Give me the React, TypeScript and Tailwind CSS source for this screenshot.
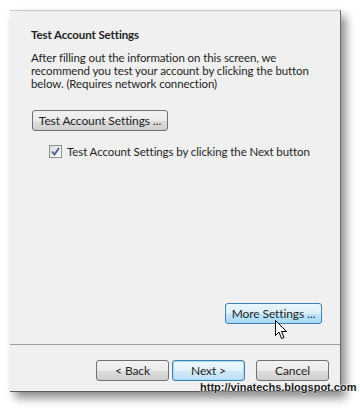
import React from 'react'

const font = { fontFamily: 'Lato, "Segoe UI", Arial, sans-serif' }

function WinButton({
  children,
  variant = 'normal',
  className = '',
}: {
  children: React.ReactNode
  variant?: 'normal' | 'default' | 'hover'
  className?: string
}) {
  const look =
    variant === 'hover'
      ? 'border-[#3c7fb1] bg-[linear-gradient(to_bottom,#eaf6fd_0%,#d9f0fc_50%,#bee6fd_51%,#a7d9f5_100%)]'
      : variant === 'default'
        ? 'border-[#3c7fb1] bg-[linear-gradient(to_bottom,#eef7fd_0%,#e2f1fb_50%,#cfe8f8_51%,#bfe0f5_100%)] shadow-[inset_0_0_0_1px_#a8dcf7]'
        : 'border-[#707070] bg-[linear-gradient(to_bottom,#f2f2f2_0%,#ebebeb_50%,#dddddd_51%,#cfcfcf_100%)]'
  return (
    <button
      type="button"
      className={`h-[21px] rounded-[3px] border text-[12px] tracking-[-0.1px] leading-none text-[#1e1e1e] flex items-center justify-center ${look} ${className}`}
      style={font}
    >
      {children}
    </button>
  )
}

export default function App() {
  return (
    <div className="relative w-[360px] h-[411px] bg-white overflow-hidden pl-[10px] pt-[10px]" style={font}>
      {/* Dialog panel */}
      <div className="w-[331px] h-[382px] bg-[#f0f0f0] flex flex-col border-t border-t-[#c8c8c8] border-r border-r-[#6a6a6a] border-b border-b-[#5a5a5a] shadow-[5px_6px_9px_rgba(0,0,0,0.45)]">
        <div className="flex-1 flex flex-col px-[21px] pt-[17px] text-[11.5px] tracking-[-0.1px] text-[#1e1e1e]">
          <h2 className="font-bold leading-[14px]">Test Account Settings</h2>
          <p className="mt-[9px] leading-[13px] whitespace-nowrap">
            After filling out the information on this screen, we
            <br />
            recommend you test your account by clicking the button
            <br />
            below. (Requires network connection)
          </p>

          <WinButton className="mt-[20px] w-[136px] ml-px">Test Account Settings ...</WinButton>

          <label className="mt-[14px] ml-[18px] flex items-center gap-[5px] leading-[13px] whitespace-nowrap">
            <span className="w-[13px] h-[13px] border border-[#8e8f8f] bg-[linear-gradient(135deg,#dcdcdc,#fbfbfb)] flex items-center justify-center">
              <svg width="9" height="9" viewBox="0 0 9 9">
                <path d="M1 4.5 L3.5 7.5 L8 1" fill="none" stroke="#4a5f97" strokeWidth="1.8" />
              </svg>
            </span>
            Test Account Settings by clicking the Next button
          </label>

          <div className="flex-1" />

          <div className="flex justify-end pb-[20px] mr-[-3px]">
            <div className="relative">
              <WinButton variant="hover" className="w-[97px]">More Settings ...</WinButton>
              {/* mouse cursor */}
              <svg className="absolute left-[50px] top-[17px]" width="13" height="20" viewBox="0 0 13 20">
                <path
                  d="M0.5 0.5 L0.5 15.5 L4 12 L6.5 18.5 L9 17.5 L6.5 11.5 L11.5 11.5 Z"
                  fill="white"
                  stroke="black"
                  strokeWidth="1"
                  strokeLinejoin="round"
                />
              </svg>
            </div>
          </div>
        </div>

        <div className="h-[47px] border-t border-t-[#a0a0a0] flex items-start justify-end pt-[15px] pr-[11px]">
          <WinButton className="w-[73px]">&lt; Back</WinButton>
          <WinButton variant="default" className="w-[73px] ml-[3px]">Next &gt;</WinButton>
          <WinButton className="w-[73px] ml-[11px]">Cancel</WinButton>
        </div>
      </div>

      {/* watermark */}
      <div
        className="absolute left-[200px] top-[381px] text-[11px] font-bold leading-[13px] text-[#202020] [text-shadow:0_0_2px_#fff,0_0_2px_#fff]"
        style={{ fontFamily: '"Liberation Sans", Arial, sans-serif' }}
      >
        http://vinatechs.blogspot.com
      </div>
    </div>
  )
}
